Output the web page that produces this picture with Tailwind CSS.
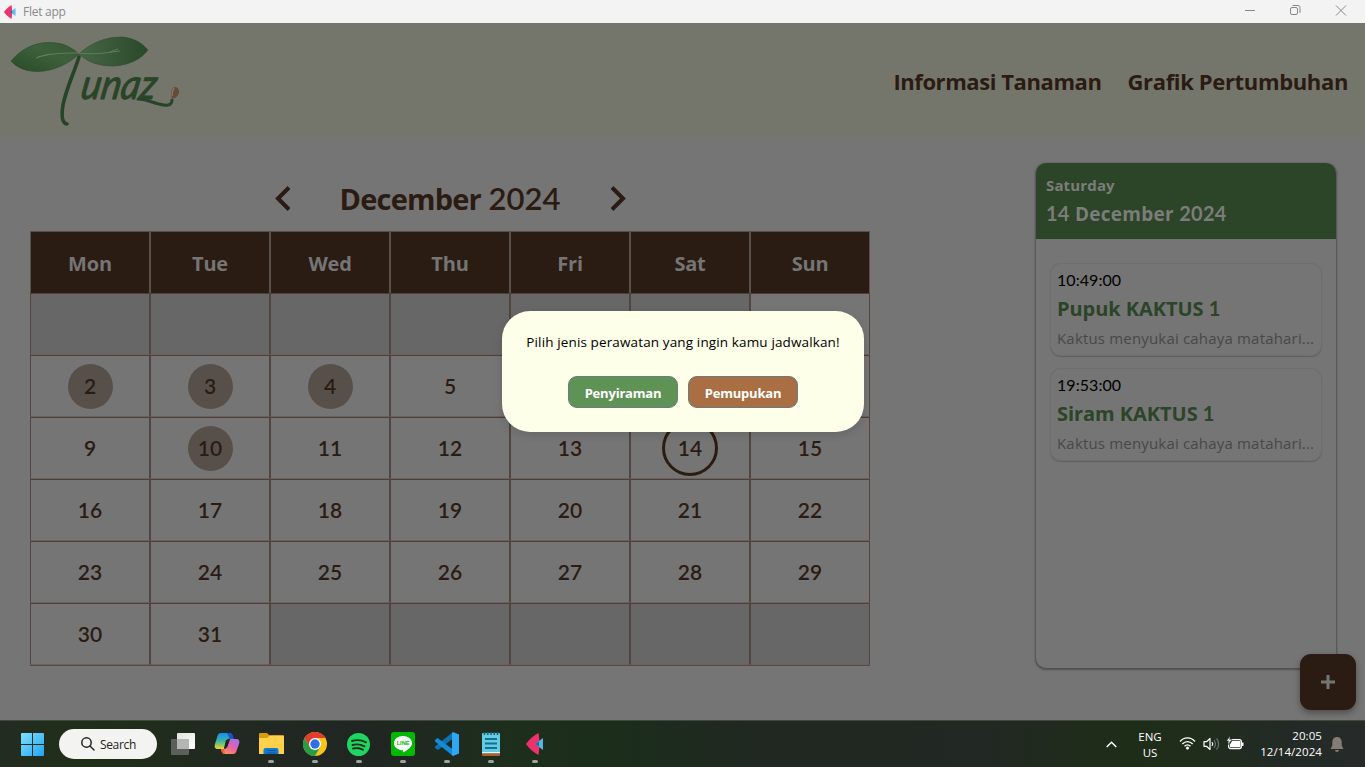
<!DOCTYPE html>
<html lang="id">
<head>
<meta charset="utf-8">
<title>Flet app</title>
<script src="https://cdn.jsdelivr.net/npm/@tailwindcss/browser@4"></script>
</head>
<body class="w-[1365px] h-[767px] overflow-hidden flex flex-col font-['Open_Sans','Noto_Sans',sans-serif] bg-[#757575] relative">

<!-- Window title bar -->
<div class="h-[23px] shrink-0 bg-[#f3f3f3] flex items-center justify-between">
  <div class="flex items-center pl-1">
    <svg class="w-[12px] h-[14px]" viewBox="0 0 12 14"><path d="M7.500 0c.8 4 .8 10 0 14C4 11.500 1.500 9.500 0 7 1.500 4.500 4 2.500 7.500 0z" fill="#f2306b"/><path d="M11.500 3v8L6 7z" fill="#5bbbe8"/><path d="M8 5.500v3L6 7z" fill="#1d5f9a"/></svg>
    <span class="ml-[7px] text-[12px] leading-[23px] text-[#8a8a8a] tracking-[-0.25px]">Flet app</span>
  </div>
  <svg class="w-[125px] h-[23px]" viewBox="0 0 125 23" fill="none" stroke="#888" stroke-width="1"><path d="M5 10.500h10"/><rect x="50.500" y="7.500" width="7" height="7" rx="1.500"/><path d="M52.500 5.500h5.500a2 2 0 0 1 2 2v5.500"/><path d="M96 5.500l10 10M106 5.500l-10 10"/></svg>
</div>

<!-- App header -->
<header class="h-[114px] shrink-0 bg-[#75766b] flex items-center justify-between">
  <svg class="w-[190px] h-[114px]" viewBox="0 23 190 114">
    <defs>
      <linearGradient id="leafL" x1="0" y1="1" x2="1" y2="0"><stop offset="0" stop-color="#294b28"/><stop offset=".6" stop-color="#3d613b"/><stop offset="1" stop-color="#37552f"/></linearGradient>
      <linearGradient id="leafR" x1="0" y1="0" x2="1" y2="0"><stop offset="0" stop-color="#486645"/><stop offset="1" stop-color="#28492a"/></linearGradient>
    </defs>
    <path d="M11 61C24 46 40 40 60 43.500c8 2 14 6 19 10.500-9 9-25 17-40 17.500C27 72 17 68 11 61z" fill="url(#leafL)" stroke="#2c4a2a" stroke-width=".6"/>
    <path d="M79 54c12-11 26-17 43-17 12 1 20 6 26 13-7 9-18 15-34 16-14 0-25-3-35-12z" fill="url(#leafR)" stroke="#2c4a2a" stroke-width=".6"/>
    <path d="M36 58c10-4 22-5 42-5 20 2 32-1 42-2M38 57l12-3M110 52l8-3" fill="none" stroke="#63805d" stroke-width=".9"/>
    <path d="M79 57c-5 16-13 32-16 48-2 12-1 18 4 19" fill="none" stroke="#274426" stroke-width="3.600" stroke-linecap="round"/>
    <text transform="translate(79.500 99) skewX(-10)" font-family="Lato" font-style="italic" font-size="42" textLength="75" lengthAdjust="spacingAndGlyphs" fill="#294427" stroke="#294427" stroke-width="1" stroke-linejoin="round">unaz</text>
    <path d="M138 99c10 0 16 5 26 6 5 1 8-1 8-5" fill="none" stroke="#294427" stroke-width="3" stroke-linecap="round"/>
    <path d="M172 98c-2-4-1-10 3-11 4 0 5 5 3 8-2 3-4 4-6 3z" fill="#664a3a"/><path d="M172.200 96c-.3-3 .5-6 2-7.500" stroke="#90806f" stroke-width="1.100" fill="none"/>
  </svg>
  <nav class="flex gap-[26px] pr-[17px] pt-[1px] text-[22px] font-bold text-[#2a1c13] leading-[30px]">
    <a class="tracking-[-0.42px]">Informasi Tanaman</a><a class="tracking-[-0.35px]">Grafik Pertumbuhan</a>
  </nav>
</header>

<!-- Content -->
<main class="h-[583px] shrink-0 flex justify-between items-start">
  <section class="pl-[30px] pt-[31px]">
    <div class="w-[840px] h-[61px] flex items-center justify-center text-[#2a1c13]">
      <svg class="w-[16px] h-[25px]" viewBox="0 0 16 25" fill="none" stroke="#2a1c13" stroke-width="4"><path d="M14 1.500L3 12.500l11 11"/></svg>
      <h1 class="w-[319px] text-center leading-[40px] text-[29px] font-bold whitespace-nowrap"><span class="tracking-[-0.8px]">December</span> <span class="font-['Lato'] font-semibold text-[31px]">2024</span></h1>
      <svg class="w-[16px] h-[25px]" viewBox="0 0 16 25" fill="none" stroke="#2a1c13" stroke-width="4"><path d="M2 1.500l11 11-11 11"/></svg>
    </div>
    <div id="week" class="mt-[2px] w-[840px] h-[62px] grid grid-cols-7"></div>
    <div id="days" class="w-[840px] grid grid-cols-7 border-b border-[#574a46]"></div>
  </section>

  <aside class="mt-[26px] mr-[29px] w-[300px] h-[505px] rounded-[10px] overflow-hidden shadow-[0_1px_2px_1px_rgba(0,0,0,0.32)] bg-[#757575]">
    <div class="h-[76px] bg-[#2c4428] text-[#7b7d7a] pl-[10px] pt-[11px]">
      <div class="text-[15px] leading-[22px] font-bold tracking-[0.15px]">Saturday</div>
      <div class="mt-[2px] text-[19px] leading-[30px] font-bold whitespace-nowrap tracking-[0.27px]"><span class="font-['Lato'] text-[20px]">14</span> December <span class="font-['Lato'] text-[20px]">2024</span></div>
    </div>
    <div class="pt-[25px] px-[15px] flex flex-col gap-[14px]">
      <article class="h-[91px] rounded-[10px] shadow-[0_0_0_1px_#6f6f6f,0_1px_1px_1px_#606060] bg-[#757575] pl-[6px] pt-[4px] whitespace-nowrap">
        <div class="font-['Lato'] text-[16px] leading-[24px] text-black tracking-[0.06px]">10:49:00</div>
        <div class="text-[20px] leading-[32px] font-bold text-[#2c4428] tracking-[-0.05px]">Pupuk KAKTUS <span class="font-['Lato']">1</span></div>
        <div class="text-[15px] leading-[26px] text-[#484848] tracking-[0.18px]">Kaktus menyukai cahaya matahari...</div>
      </article>
      <article class="h-[91px] rounded-[10px] shadow-[0_0_0_1px_#6f6f6f,0_1px_1px_1px_#606060] bg-[#757575] pl-[6px] pt-[4px] whitespace-nowrap">
        <div class="font-['Lato'] text-[16px] leading-[24px] text-black tracking-[0.06px]">19:53:00</div>
        <div class="text-[20px] leading-[32px] font-bold text-[#2c4428] tracking-[-0.05px]">Siram KAKTUS <span class="font-['Lato']">1</span></div>
        <div class="text-[15px] leading-[26px] text-[#484848] tracking-[0.18px]">Kaktus menyukai cahaya matahari...</div>
      </article>
    </div>
  </aside>
</main>

<!-- Floating action button -->
<button class="absolute left-[1300px] top-[654px] w-[56px] h-[56px] rounded-[11px] bg-[#2a1c13] shadow-[0_3px_6px_rgba(0,0,0,0.35)] flex items-center justify-center">
  <svg class="w-[14px] h-[14px]" viewBox="0 0 14 14"><path d="M7 0v14M0 7h14" stroke="#757575" stroke-width="3"/></svg>
</button>

<!-- Care type dialog -->
<div class="absolute left-[502px] top-[311px] w-[362px] h-[121px] rounded-[28px] bg-[#feffe8] shadow-[0_3px_10px_rgba(0,0,0,0.12)] flex flex-col items-center">
  <p class="mt-[20px] text-[13.5px] leading-[22px] text-black whitespace-nowrap tracking-[0.13px]">Pilih jenis perawatan yang ingin kamu jadwalkan!</p>
  <div class="mt-[23px] flex gap-[10px] text-[13px] font-bold text-white tracking-[-0.2px]">
    <button class="w-[110px] h-[32px] rounded-[9px] border border-[#6f7985] bg-[#5f9356] flex items-center justify-center pt-[3px]">Penyiraman</button>
    <button class="w-[110px] h-[32px] rounded-[9px] border border-[#6f7985] bg-[#a96e42] flex items-center justify-center pt-[3px]">Pemupukan</button>
  </div>
</div>

<!-- Taskbar -->
<footer class="h-[47px] shrink-0 border-t border-[#3d4a39] bg-[linear-gradient(90deg,#232c21_0%,#1f2f18_6%,#212823_20%,#202622_27%,#1d2f1c_38%,#1b2e1b_44%,#202821_55%,#222823_72%,#1e2d18_82%,#1f2d1a_87%,#232a26_94%,#262b29_100%)] flex items-start justify-between">
  <div class="flex items-start">
    <svg class="ml-[21px] mt-[12px] w-[23px] h-[23px]" viewBox="0 0 23 23"><defs><linearGradient id="win" x1="0" y1="0" x2="1" y2="1"><stop offset="0" stop-color="#7fe0fb"/><stop offset="1" stop-color="#22a5f4"/></linearGradient></defs><g fill="url(#win)"><path d="M0 1q0-1 1-1h10v11H0zM12 0h10q1 0 1 1v10H12zM0 12h11v11H1q-1 0-1-1zM12 12h11v10q0 1-1 1H12z"/></g></svg>
    <div class="ml-[15px] mt-[8px] w-[98px] h-[30px] rounded-full bg-[#f3f4f2] flex items-center pl-[22px]">
      <svg class="w-[14px] h-[14px]" viewBox="0 0 14 14" fill="none" stroke="#222" stroke-width="1.500" stroke-linecap="round"><circle cx="5.500" cy="5.500" r="4.700"/><path d="M9 9l4 4"/></svg>
      <span class="ml-[5px] text-[12px] leading-[30px] text-[#222] tracking-[-0.35px] pt-[1px]">Search</span>
    </div>
    <div class="ml-[4px] grid grid-cols-[repeat(9,44px)]">
      <div class="pt-[11px] flex justify-center"><svg class="w-[26px] h-[26px]" viewBox="0 0 26 26"><defs><linearGradient id="tv" x1="0" x2="1" y1="0" y2="1"><stop offset="0" stop-color="#e2e2e2"/><stop offset="1" stop-color="#fff"/></linearGradient></defs><rect x="7" y="1" width="18" height="16" rx="1" fill="url(#tv)"/><rect x="1" y="7" width="18" height="16" rx="1" fill="#5c5f5c"/><path d="M7 7h12v10H7z" fill="#b4b6b4"/></svg></div>
      <div class="pt-[11px] flex justify-center"><svg class="w-[26px] h-[24px]" viewBox="0 0 26 24"><defs><linearGradient id="cpA" x1="0" x2="0" y1="0" y2="1"><stop offset="0" stop-color="#1b8af0"/><stop offset=".5" stop-color="#37b6a5"/><stop offset="1" stop-color="#f3d22d"/></linearGradient><linearGradient id="cpB" x1=".8" x2=".2" y1="0" y2="1"><stop offset="0" stop-color="#a76df0"/><stop offset=".5" stop-color="#e662a6"/><stop offset="1" stop-color="#ff9656"/></linearGradient></defs><path d="M7 1h8c2 0 3 1 3.500 3l.8 2.500H16c-2 0-3 1-3.600 3L10 17H4c-3 0-4-2-3-5L3.500 4C4 2 5 1 7 1z" fill="url(#cpA)"/><path d="M19 22h-8c-2 0-3-1-3.500-3L7 17h3c2 0 3-1 3.600-3L16 7h6c3 0 4 2 3 5l-2.500 7c-.5 2-1.500 3-3.500 3z" fill="url(#cpB)"/><path d="M13 1h2.500c2 0 3 1 3.500 3l1 3h-4z" fill="#1c52cf"/><path d="M10 17H7l.5 2c.5 2 1.500 3 3.500 3z" fill="#f05d3f"/><path d="M12 8l4-1-3 8-3 1z" fill="#212823"/></svg></div>
      <div class="pt-[12px] flex flex-col items-center"><svg class="w-[25px] h-[23px]" viewBox="0 0 25 23"><path d="M0 1q0-1 1-1h7l2 2h14q1 0 1 1v8H0z" fill="#dc9c08"/><path d="M0 5h8l2.500-2H24q1 0 1 1v17H0z" fill="#ffd04b"/><path d="M4.500 21v-4q0-2 2-2h11q2 0 2 2v4z" fill="#1179cf"/><path d="M8 17.500h9M8 20h9" stroke="#0d569e" stroke-width="1"/></svg><i class="mt-[4px] w-[6px] h-[3px] rounded-full bg-[#9ea39d]"></i></div>
      <div class="pt-[11px] flex flex-col items-center"><svg class="w-[24px] h-[24px]" viewBox="0 0 24 24"><circle cx="12" cy="12" r="12" fill="#fbc417"/><path d="M1.600 6A12 12 0 0 1 22.400 6H12l-5.200 9z" fill="#e33b2e"/><path d="M1.600 6A12 12 0 0 0 12 24l5.200-9H6.800z" fill="#2a9c48"/><circle cx="12" cy="12" r="6" fill="#fff"/><circle cx="12" cy="12" r="4.700" fill="#2f70e6"/></svg><i class="mt-[4px] w-[6px] h-[3px] rounded-full bg-[#9ea39d]"></i></div>
      <div class="pt-[12px] pr-[1px] flex flex-col items-center"><svg class="w-[23px] h-[23px]" viewBox="0 0 23 23"><circle cx="11.500" cy="11.500" r="11.500" fill="#1ed760"/><path d="M5 8c5-1.500 9.500-1 14 1.300M5.500 12c4.300-1.200 8.200-.7 12 1.300M6 15.500c3.700-.9 7-.5 10 1.300" fill="none" stroke="#17301c" stroke-width="1.900" stroke-linecap="round"/></svg><i class="mt-[4px] w-[6px] h-[3px] rounded-full bg-[#9ea39d]"></i></div>
      <div class="pt-[11px] flex flex-col items-center"><svg class="w-[24px] h-[24px]" viewBox="0 0 24 24"><rect width="24" height="24" rx="3" fill="#00b900"/><path d="M12 4c5 0 9 3 9 7.200 0 3.500-4 6.500-9 9.300v-2.200C7 18 3 15.500 3 11.200 3 7 7 4 12 4z" fill="#fff"/><text x="5.700" y="13.200" font-family="Liberation Sans" font-weight="700" font-size="5.800" textLength="12.800" lengthAdjust="spacingAndGlyphs" fill="#00b900">LINE</text></svg><i class="mt-[4px] w-[6px] h-[3px] rounded-full bg-[#9ea39d]"></i></div>
      <div class="pt-[11px] flex flex-col items-center"><svg class="w-[24px] h-[24px]" viewBox="0 0 24 24"><path d="M18 0v6.500L3 18 0 16v-1.500z" fill="#0f70b3"/><path d="M0 9.500V8l2.500-2L18 17.500V24z" fill="#138bd6"/><path d="M18 0l6 2.500v19L18 24l-1-1V1z" fill="#2fa8f2"/></svg><i class="mt-[4px] w-[6px] h-[3px] rounded-full bg-[#9ea39d]"></i></div>
      <div class="pt-[11px] flex flex-col items-center"><svg class="w-[20px] h-[24px]" viewBox="0 0 20 24"><rect x="1" y="1" width="18" height="20" rx="1" fill="#64cbe2"/><path d="M1 20h18v1.500H1z" fill="#e8f1f2"/><path d="M1 22h18v1q0 1-1 1H2q-1 0-1-1z" fill="#b65b22"/><path d="M3.500 0v3M6.800 0v3M10 0v3M13.200 0v3M16.500 0v3" stroke="#155e79" stroke-width="1.500"/><path d="M4 7h12M4 11.500h12M4 16h12" stroke="#14708f" stroke-width="1.800"/></svg><i class="mt-[4px] w-[6px] h-[3px] rounded-full bg-[#9ea39d]"></i></div>
      <div class="pt-[12px] flex flex-col items-center"><svg class="mr-[2px] w-[17px] h-[22px]" viewBox="0 0 17 22"><path d="M12.500 0c1.200 7 1.200 15 0 22C6 18.500 3 15 0 11 3 7 6 3.500 12.500 0z" fill="#ee316b"/><path d="M17 5v12l-8-6z" fill="#58b6e4"/><path d="M13 8.200v5.600L9 11z" fill="#246ba5"/></svg><i class="mt-[5px] w-[6px] h-[3px] rounded-full bg-[#9ea39d]"></i></div>
    </div>
  </div>
  <div class="flex items-start text-white text-[11.500px]">
    <svg class="mt-[20px] w-[11px] h-[7px]" viewBox="0 0 11 7"><path d="M.7 6L5.500 1.200 10.300 6" fill="none" stroke="#fff" stroke-width="1.500"/></svg>
    <div class="ml-[20px] mt-[8px] w-[26px] text-center leading-[16px]">ENG<br>US</div>
    <svg class="ml-[16px] mt-[16px] w-[17px] h-[13px]" viewBox="0 0 17 13" fill="none" stroke="#fff" stroke-width="1.300"><path d="M1 4.500C5-.3 12-.3 16 4.500M3.300 7c3-3.300 7.400-3.300 10.400 0M5.500 9.300c1.800-1.900 4.200-1.900 6 0"/><circle cx="8.500" cy="11" r="1.500" fill="#fff" stroke="none"/></svg>
    <svg class="ml-[7px] mt-[16px] w-[17px] h-[14px]" viewBox="0 0 17 14" fill="none" stroke="#fff" stroke-width="1.200"><path d="M1 4.700h2.500L7 1.500v11L3.500 9.300H1z" stroke-linejoin="round"/><path d="M9 5c1 1.300 1 2.700 0 4"/><path d="M11 3c2 2.700 2 5.300 0 8M13.500 1.300c2.800 3.700 2.800 7.700 0 11.400" stroke="#6b716c"/></svg>
    <svg class="ml-[6px] mt-[15px] w-[18px] h-[14px]" viewBox="0 0 18 14"><rect x="2.600" y="3.600" width="12.800" height="9" rx="2" fill="none" stroke="#fff" stroke-width="1.200"/><path d="M6 5h8.500v6.300H4V8.500zM16 6.500h1.500v3.500H16z" fill="#fff"/><path d="M4 0L.5 5H3l-1 4 4-5.500H3.700z" fill="#fff" stroke="#232a26" stroke-width=".5"/></svg>
    <div class="ml-[16px] mt-[7px] w-[62px] text-right leading-[16px] whitespace-nowrap tracking-[0.08px]">20:05<br>12/14/2024</div>
    <svg class="ml-[8px] mr-[21px] mt-[16px] w-[14px] h-[16px]" viewBox="0 0 14 16" fill="#857b79"><path d="M7 0c3 0 4.700 2 4.700 5v3.500L13.500 12H.5l1.800-3.500V5C2.300 2 4 0 7 0zM5 13h4c-.2 1.300-1 2-2 2s-1.800-.7-2-2z"/></svg>
  </div>
</footer>

<script>
  document.getElementById('week').innerHTML = ['Mon','Tue','Wed','Thu','Fri','Sat','Sun'].map(d =>
    `<div class="border border-b-0 border-[#57504b] bg-[#2a1c13] text-[#757575] text-[20px] tracking-[-0.2px] font-bold flex items-center justify-center pt-[3px]">${d}</div>`).join('');
  const marked = [2, 3, 4, 10];
  // Days that lie fully behind the open dialog carry no label.
  const covered = [1, 6, 7, 8];
  let html = '';
  for (let i = 0; i < 42; i++) {
    const n = i - 5;
    const day = n >= 1 && n <= 31;
    const bg = day ? 'bg-[#757575]' : 'bg-[#676767]';
    let label = '';
    if (day && !covered.includes(n)) {
      let ring = 'w-[56px] h-[56px]';
      if (marked.includes(n)) ring = 'w-[45px] h-[45px] bg-[#57504a]';
      if (n === 14) ring = 'w-[56px] h-[56px] border-[3px] border-[#2a1c13]';
      label = `<span class="${ring} rounded-full shrink-0 flex items-center justify-center pb-[1px]">${n}</span>`;
    }
    html += `<div class="${bg} h-[62px] border-x border-t border-b border-x-[#52453f] border-t-[#4d3f3a] border-b-[#6a605e] text-[#2a1c13] font-['Lato'] font-semibold text-[21px] flex items-center justify-center">${label}</div>`;
  }
  document.getElementById('days').innerHTML = html;
</script>
</body>
</html>
